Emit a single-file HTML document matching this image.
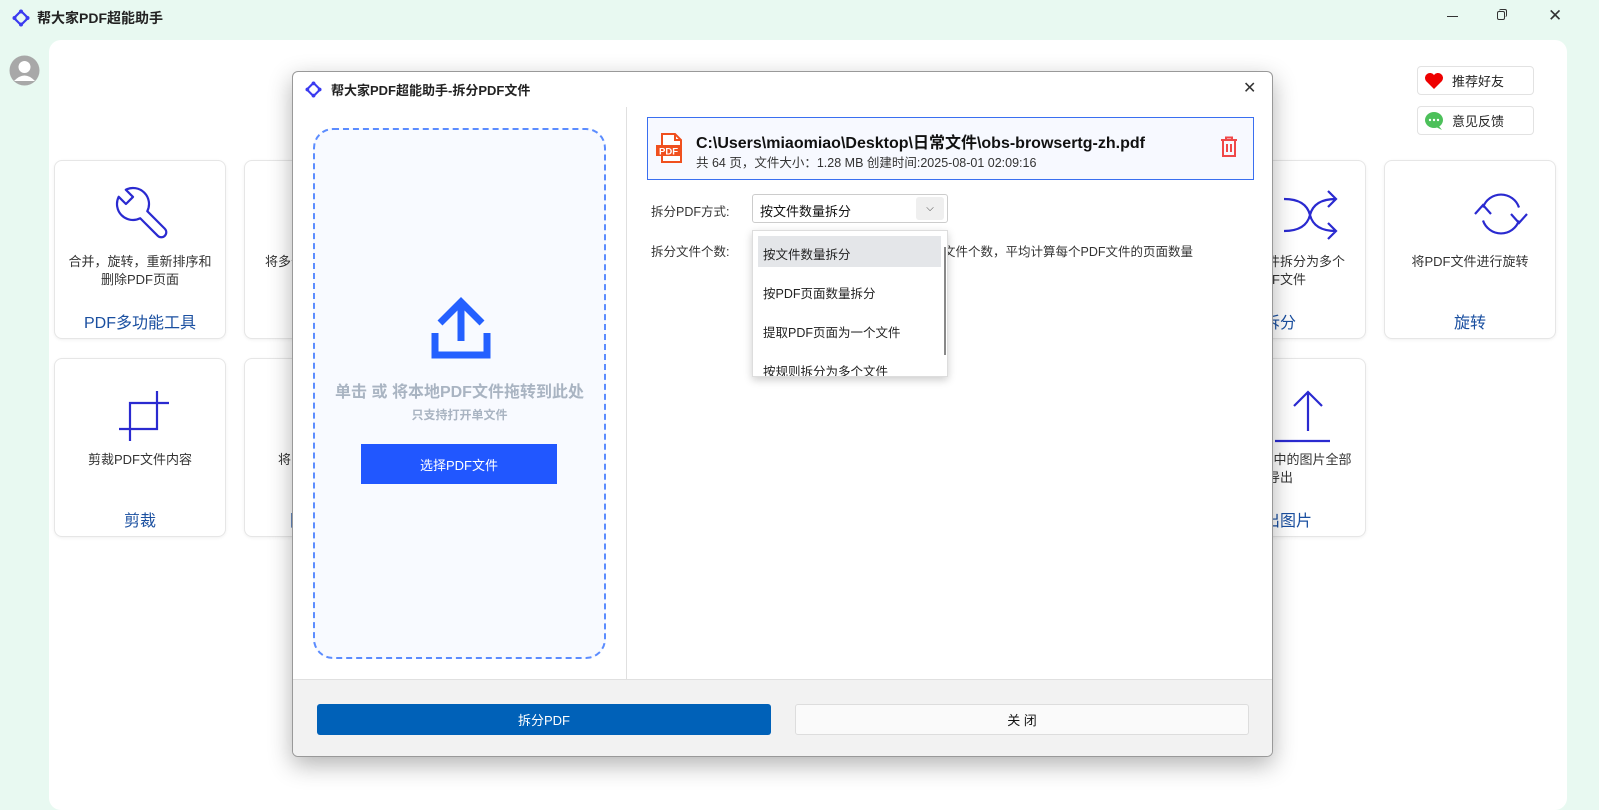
<!DOCTYPE html>
<html><head><meta charset="utf-8"><style>
*{margin:0;padding:0;box-sizing:border-box}
body{width:1599px;height:800px;overflow:hidden;background:#e8f9f1;font-family:"Liberation Sans","Noto Sans CJK SC",sans-serif;position:relative;color:#222}
.abs{position:absolute}
.main{left:49px;top:40px;width:1518px;height:770px;background:#fff;border-radius:12px}
.card{position:absolute;width:172px;height:179px;background:#fff;border:1px solid #e6e6e6;border-radius:8px;box-shadow:0 1px 3px rgba(0,0,0,.06);text-align:center}
.card .d{position:absolute;left:0;right:0;top:92px;font-size:13px;line-height:18px;color:#333}
.card .t{position:absolute;left:0;right:0;top:148px;font-size:16px;color:#1a4fa0}
.card svg{position:absolute;left:0;top:0}
.dlg{left:292px;top:71px;width:981px;height:686px;background:#fff;border:1px solid #999;border-radius:6px;box-shadow:0 8px 24px rgba(0,0,0,.3);overflow:hidden}
.btn2{position:absolute;background:#fff;border:1px solid #e2e2e2;border-radius:4px;font-size:13px;display:flex;align-items:center}
</style></head><body>
<svg class="abs" style="left:12px;top:9px" width="18" height="18" viewBox="0 0 18 18"><path d="M9 2 L16 9 L9 16 L2 9Z" fill="none" stroke="#3b3bf0" stroke-width="2.2"/><circle cx="9" cy="2.5" r="2" fill="#3b3bf0"/><circle cx="15.5" cy="9" r="2" fill="#3b3bf0"/><circle cx="9" cy="15.5" r="2" fill="#3b3bf0"/><circle cx="2.5" cy="9" r="2" fill="#3b3bf0"/></svg>
<div class="abs" style="left:37px;top:8px;font-size:14px;font-weight:bold">帮大家PDF超能助手</div>
<div class="abs" style="left:1447px;top:16px;width:11px;height:1px;background:#333"></div>
<div class="abs" style="left:1497px;top:11px;width:8px;height:9px;border:1px solid #333;border-radius:2px"></div>
<div class="abs" style="left:1499px;top:9px;width:8px;height:8px;border-top:1px solid #333;border-right:1px solid #333;border-radius:2px"></div>
<div class="abs" style="left:1548px;top:6px;font-size:17px;color:#333">✕</div>
<svg class="abs" style="left:9px;top:55px" width="31" height="31" viewBox="0 0 31 31"><circle cx="15.5" cy="15.5" r="15" fill="#a8a8a8"/><circle cx="15.5" cy="12" r="6" fill="#fff"/><path d="M5 26 Q15.5 15 26 26" fill="#fff"/></svg>
<div class="abs main"></div>
<div class="btn2" style="left:1417px;top:66px;width:117px;height:29px"><svg style="margin:0 8px 0 6px" width="20" height="18" viewBox="0 0 20 18"><path d="M10 17 L2 9 A4.8 4.8 0 0 1 10 3 A4.8 4.8 0 0 1 18 9Z" fill="#e00"/></svg>推荐好友</div>
<div class="btn2" style="left:1417px;top:106px;width:117px;height:29px"><svg style="margin:0 8px 0 6px" width="20" height="20" viewBox="0 0 20 20"><ellipse cx="10" cy="9" rx="9" ry="8" fill="#4cc05a"/><path d="M14 14 L18 19 L12 16Z" fill="#4cc05a"/><circle cx="6" cy="9" r="1.2" fill="#fff"/><circle cx="10" cy="9" r="1.2" fill="#fff"/><circle cx="14" cy="9" r="1.2" fill="#fff"/></svg>意见反馈</div>
<div class="card" style="left:54px;top:160px"><svg width="172" height="90" viewBox="0 0 172 90"><g transform="translate(78,43) rotate(-45)"><path d="M-5,-15.2 L-5,-5 L5,-5 L5,-15.2 A16 16 0 0 1 5,15.2 L5,40 A5 5 0 0 1 -5,40 L-5,15.2 A16 16 0 0 1 -5,-15.2Z" fill="none" stroke="#2a2ad0" stroke-width="2.2" stroke-linejoin="round"/></g></svg><div class="d">合并，旋转，重新排序和<br>删除PDF页面</div><div class="t">PDF多功能工具</div></div>
<div class="card" style="left:244px;top:160px"><div class="d">将多个PDF文件合并为<br>一页中</div></div>
<div class="card" style="left:54px;top:358px"><svg width="172" height="90" viewBox="0 0 172 90"><path d="M102 32 V70 H64 M75 82 V44 H114" fill="none" stroke="#2a2ad0" stroke-width="2.2"/></svg><div class="d">剪裁PDF文件内容</div><div class="t">剪裁</div></div>
<div class="card" style="left:244px;top:358px"><div class="d">将图片转换为PDF<br>JPG，PNG</div><div class="t">图片转PDF</div></div>
<div class="card" style="left:1194px;top:160px"><svg width="172" height="90" viewBox="0 0 172 90"><path d="M89 38 Q111 38 115 54 Q119 70 141 70 M89 70 Q111 70 115 54 Q119 38 141 38 M133 30 L141 38 L133 46 M133 62 L141 70 L133 78" fill="none" stroke="#2a2ad0" stroke-width="2.2"/></svg><div class="d">将PDF文件拆分为多个<br>PDF文件</div><div class="t">拆分</div></div>
<div class="card" style="left:1384px;top:160px"><svg width="172" height="90" viewBox="0 0 172 90"><path d="M98 46.5 A19 19 0 0 1 134 46.5 M134 59.5 A19 19 0 0 1 98 59.5 M90 53 L98 44 L106 53 M126 53 L134 62 L142 53" fill="none" stroke="#2a2ad0" stroke-width="2.2"/></svg><div class="d">将PDF文件进行旋转</div><div class="t">旋转</div></div>
<div class="card" style="left:1194px;top:358px"><svg width="172" height="90" viewBox="0 0 172 90"><path d="M80 82 H135 M113 72 V33 M99 47 L113 33 L127 47" fill="none" stroke="#2a2ad0" stroke-width="2.2"/></svg><div class="d">将PDF文件中的图片全部<br>导出</div><div class="t">导出图片</div></div>
<div class="abs dlg">
 <svg class="abs" style="left:12px;top:9px" width="17" height="17" viewBox="0 0 18 18"><path d="M9 2 L16 9 L9 16 L2 9Z" fill="none" stroke="#3b3bf0" stroke-width="2.2"/><circle cx="9" cy="2.5" r="2" fill="#3b3bf0"/><circle cx="15.5" cy="9" r="2" fill="#3b3bf0"/><circle cx="9" cy="15.5" r="2" fill="#3b3bf0"/><circle cx="2.5" cy="9" r="2" fill="#3b3bf0"/></svg>
 <div class="abs" style="left:38px;top:8px;font-size:13px;font-weight:bold">帮大家PDF超能助手-拆分PDF文件</div>
 <div class="abs" style="left:950px;top:6px;font-size:16px;color:#333">✕</div>
 <div class="abs" style="left:333px;top:35px;width:1px;height:572px;background:#e0e0e0"></div>
 <div class="abs" style="left:20px;top:56px;width:293px;height:531px;border:2px dashed #5b8cff;border-radius:20px;background:#f8faff"></div>
 <svg class="abs" style="left:138px;top:225px" width="60" height="62" viewBox="0 0 60 62"><path d="M30 8 V44 M9 26 L30 5 L51 26" fill="none" stroke="#2460ff" stroke-width="7"/><path d="M4 36 V58 H56 V36" fill="none" stroke="#2460ff" stroke-width="7"/></svg>
 <div class="abs" style="left:20px;width:293px;top:306px;text-align:center;font-size:16px;font-weight:bold;color:#a9b4c2">单击 或 将本地PDF文件拖转到此处</div>
 <div class="abs" style="left:20px;width:293px;top:334px;text-align:center;font-size:12px;font-weight:bold;color:#a9b4c2">只支持打开单文件</div>
 <div class="abs" style="left:68px;top:372px;width:196px;height:40px;background:#2157ff;color:#fff;font-size:13px;display:flex;align-items:center;justify-content:center">选择PDF文件</div>
 <div class="abs" style="left:354px;top:45px;width:607px;height:63px;border:1px solid #3a6ff0;background:#f7f9ff"></div>
 <svg class="abs" style="left:362px;top:60px" width="32" height="32" viewBox="0 0 32 32"><path d="M7 2 H20 L26 8 V30 H7Z" fill="#fff" stroke="#f0501e" stroke-width="2"/><path d="M20 2 V8 H26" fill="none" stroke="#f0501e" stroke-width="2"/><rect x="1" y="13" width="25" height="11" fill="#f0501e"/><text x="13.5" y="22.5" font-size="9.5" fill="#fff" text-anchor="middle" font-family="Liberation Sans" font-weight="bold">PDF</text></svg>
 <div class="abs" style="left:403px;top:57px;font-size:16px;font-weight:bold;color:#111">C:\Users\miaomiao\Desktop\日常文件\obs-browsertg-zh.pdf</div>
 <div class="abs" style="left:403px;top:80px;font-size:12.5px;color:#333">共 64 页，文件大小：1.28 MB 创建时间:2025-08-01 02:09:16</div>
 <svg class="abs" style="left:926px;top:64px" width="20" height="22" viewBox="0 0 20 22"><path d="M2 4 H18 M7 4 V1.5 H13 V4 M4 4 V20 H16 V4 M8 8 V16 M12 8 V16" fill="none" stroke="#f04848" stroke-width="2"/></svg>
 <div class="abs" style="left:358px;top:129px;font-size:12.5px;color:#333">拆分PDF方式:</div>
 <div class="abs" style="left:459px;top:122px;width:196px;height:29px;border:1px solid #ccc;border-radius:3px;background:#fff"></div>
 <div class="abs" style="left:467px;top:129px;font-size:13px;color:#111">按文件数量拆分</div>
 <div class="abs" style="left:623px;top:125px;width:28px;height:23px;background:#efefef;border-radius:3px;text-align:center;font-size:10px;line-height:23px;color:#444">⌵</div>
 <div class="abs" style="left:358px;top:169px;font-size:12.5px;color:#333">拆分文件个数:</div>
 <div class="abs" style="left:650px;top:169px;font-size:12.5px;color:#333">文件个数，平均计算每个PDF文件的页面数量</div>
 <div class="abs" style="left:459px;top:158px;width:196px;height:147px;background:#fff;border:1px solid #ddd;box-shadow:0 3px 8px rgba(0,0,0,.2);overflow:hidden;font-size:12.5px;color:#222">
  <div class="abs" style="left:5px;top:5px;width:183px;height:31px;background:#e4e6e9"></div>
  <div class="abs" style="left:191px;top:16px;width:2px;height:108px;background:#888"></div>
  <div class="abs" style="left:10px;top:13px">按文件数量拆分</div>
  <div class="abs" style="left:10px;top:52px">按PDF页面数量拆分</div>
  <div class="abs" style="left:10px;top:91px">提取PDF页面为一个文件</div>
  <div class="abs" style="left:10px;top:130px">按规则拆分为多个文件</div>
 </div>
 <div class="abs" style="left:0;top:607px;width:981px;height:80px;background:#f2f2f2;border-top:1px solid #e0e0e0"></div>
 <div class="abs" style="left:24px;top:632px;width:454px;height:31px;background:#0061b8;border-radius:3px;color:#fff;font-size:13px;display:flex;align-items:center;justify-content:center">拆分PDF</div>
 <div class="abs" style="left:502px;top:632px;width:454px;height:31px;background:#fafafa;border:1px solid #ddd;border-radius:3px;color:#111;font-size:13px;display:flex;align-items:center;justify-content:center">关 闭</div>
</div>
</body></html>
